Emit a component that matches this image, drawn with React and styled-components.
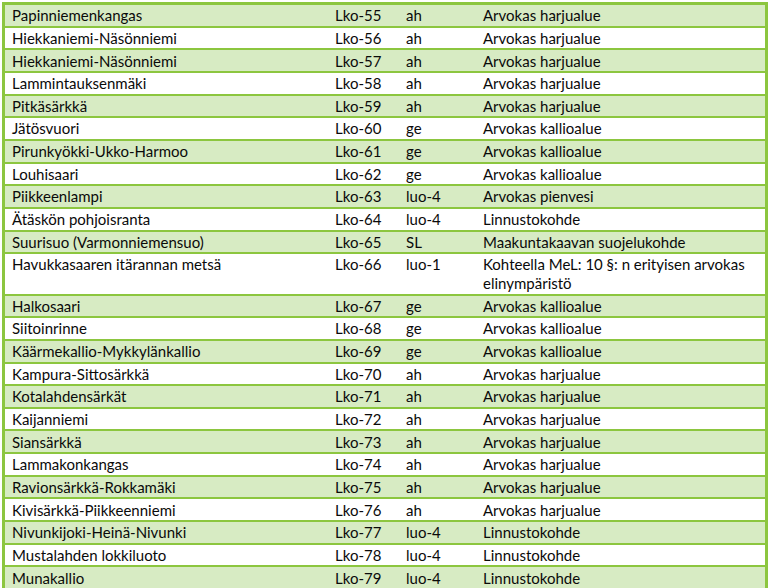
import styled, { createGlobalStyle } from "styled-components";

const GlobalStyle = createGlobalStyle`
  html, body {
    margin: 0;
    padding: 0;
    background: #ffffff;
  }
  body {
    font-family: Lato, "Open Sans", "Liberation Sans", sans-serif;
    color: #0a0a0a;
  }
`

const Page = styled.div`
  padding: 2px 0 0 2px;
  width: 768px;
  height: 588px;
  box-sizing: border-box;
  overflow: hidden;
`

const Table = styled.div`
  width: 766px;
  box-sizing: border-box;
  border-top: 3px solid #8cc63f;
  border-left: 3px solid #8cc63f;
  border-right: 3px solid #8cc63f;
`

const Row = styled.div`
  display: grid;
  grid-template-columns: 323px 71px 77px 1fr;
  background: ${(p) => (p.$shaded ? "#d7ebc3" : "#ffffff")};
  border-bottom: 2.67px solid #8cc63f;
  padding: 1.2px 0 0.8px;
`

const Cell = styled.div`
  padding-left: 7px;
  font-size: 15px;
  line-height: 18.67px;
  white-space: nowrap;
`

const rows = [
  ["Papinniemenkangas", "Lko-55", "ah", "Arvokas harjualue"],
  ["Hiekkaniemi-Näsönniemi", "Lko-56", "ah", "Arvokas harjualue"],
  ["Hiekkaniemi-Näsönniemi", "Lko-57", "ah", "Arvokas harjualue"],
  ["Lammintauksenmäki", "Lko-58", "ah", "Arvokas harjualue"],
  ["Pitkäsärkkä", "Lko-59", "ah", "Arvokas harjualue"],
  ["Jätösvuori", "Lko-60", "ge", "Arvokas kallioalue"],
  ["Pirunkyökki-Ukko-Harmoo", "Lko-61", "ge", "Arvokas kallioalue"],
  ["Louhisaari", "Lko-62", "ge", "Arvokas kallioalue"],
  ["Piikkeenlampi", "Lko-63", "luo-4", "Arvokas pienvesi"],
  ["Ätäskön pohjoisranta", "Lko-64", "luo-4", "Linnustokohde"],
  ["Suurisuo (Varmonniemensuo)", "Lko-65", "SL", "Maakuntakaavan suojelukohde"],
  ["Havukkasaaren itärannan metsä", "Lko-66", "luo-1", ["Kohteella MeL: 10 §: n erityisen arvokas", "elinympäristö"]],
  ["Halkosaari", "Lko-67", "ge", "Arvokas kallioalue"],
  ["Siitoinrinne", "Lko-68", "ge", "Arvokas kallioalue"],
  ["Käärmekallio-Mykkylänkallio", "Lko-69", "ge", "Arvokas kallioalue"],
  ["Kampura-Sittosärkkä", "Lko-70", "ah", "Arvokas harjualue"],
  ["Kotalahdensärkät", "Lko-71", "ah", "Arvokas harjualue"],
  ["Kaijanniemi", "Lko-72", "ah", "Arvokas harjualue"],
  ["Siansärkkä", "Lko-73", "ah", "Arvokas harjualue"],
  ["Lammakonkangas", "Lko-74", "ah", "Arvokas harjualue"],
  ["Ravionsärkkä-Rokkamäki", "Lko-75", "ah", "Arvokas harjualue"],
  ["Kivisärkkä-Piikkeenniemi", "Lko-76", "ah", "Arvokas harjualue"],
  ["Nivunkijoki-Heinä-Nivunki", "Lko-77", "luo-4", "Linnustokohde"],
  ["Mustalahden lokkiluoto", "Lko-78", "luo-4", "Linnustokohde"],
  ["Munakallio", "Lko-79", "luo-4", "Linnustokohde"],
];

export default function App() {
  return (
    <>
      <GlobalStyle />
      <Page>
        <Table>
          {rows.map(([name, code, type, desc], i) => (
            <Row key={code} $shaded={i % 2 === 0}>
              <Cell>{name}</Cell>
              <Cell>{code}</Cell>
              <Cell>{type}</Cell>
              <Cell>
                {Array.isArray(desc) ? (
                  <>
                    {desc[0]}
                    <br />
                    {desc[1]}
                  </>
                ) : (
                  desc
                )}
              </Cell>
            </Row>
          ))}
        </Table>
      </Page>
    </>
  );
}
